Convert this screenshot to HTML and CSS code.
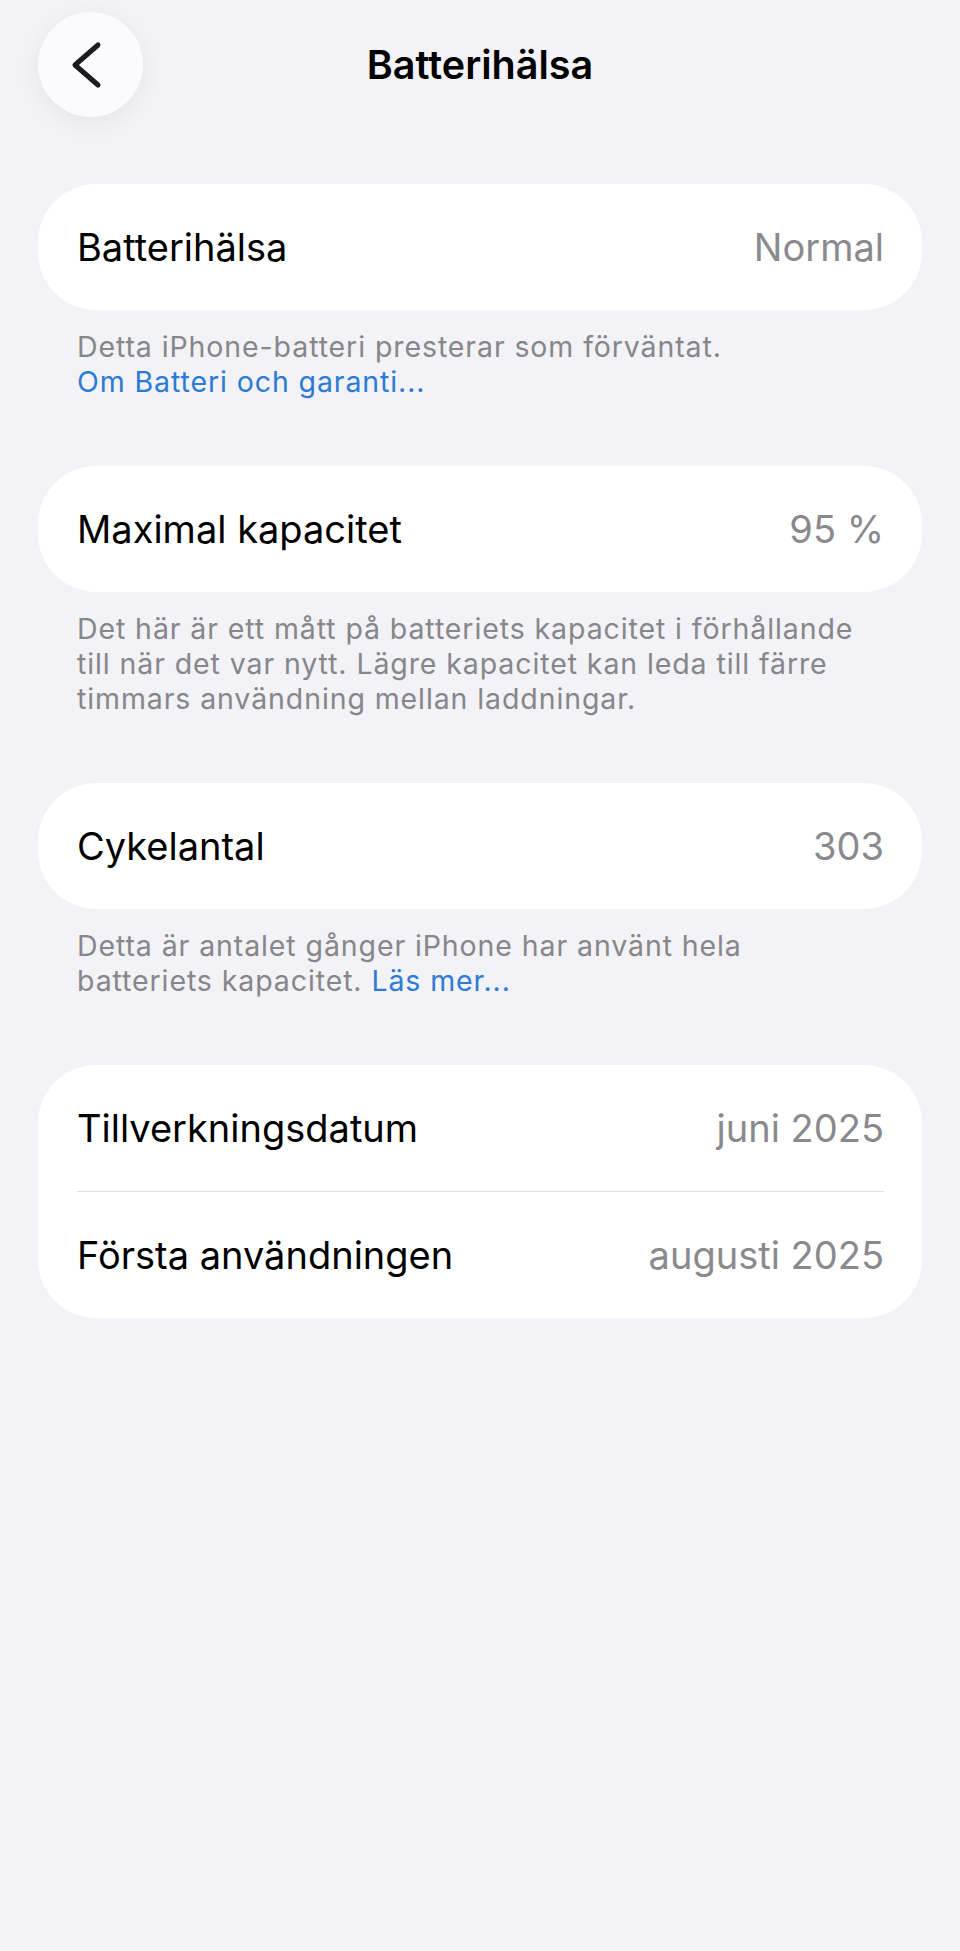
FILE: index.html
```html
<!DOCTYPE html>
<html lang="sv">
  <head>
    <meta charset="UTF-8" />
    <title>Batterihälsa</title>
    <meta name="viewport" content="width=device-width, initial-scale=1.0" />
    <link rel="stylesheet" href="styles.css">
  </head>
  <body>
    <header class="nav-bar">
      <button class="back-btn" type="button" aria-label="Tillbaka">
        <svg width="105" height="105" viewBox="0 0 105 105">
          <polyline points="60,33 37,53 60,73" fill="none" stroke="#1c1c1e" stroke-width="5" stroke-linecap="round" stroke-linejoin="round" />
        </svg>
      </button>
      <h1>Batterihälsa</h1>
    </header>

    <main class="settings">
      <section class="group">
        <div class="card">
          <div class="row">
            <span class="label">Batterihälsa</span>
            <span class="value">Normal</span>
          </div>
        </div>
        <p class="footer">
          Detta iPhone-batteri presterar som förväntat.<br />
          <a href="#">Om Batteri och garanti...</a>
        </p>
      </section>

      <section class="group">
        <div class="card">
          <div class="row">
            <span class="label">Maximal kapacitet</span>
            <span class="value">95 %</span>
          </div>
        </div>
        <p class="footer">
          Det här är ett mått på batteriets kapacitet i förhållande till när det var nytt. Lägre kapacitet kan leda till färre timmars användning mellan laddningar.
        </p>
      </section>

      <section class="group">
        <div class="card">
          <div class="row">
            <span class="label">Cykelantal</span>
            <span class="value">303</span>
          </div>
        </div>
        <p class="footer">
          Detta är antalet gånger iPhone har använt hela batteriets kapacitet. <a href="#">Läs mer...</a>
        </p>
      </section>

      <section class="group">
        <div class="card">
          <div class="row">
            <span class="label">Tillverkningsdatum</span>
            <span class="value">juni 2025</span>
          </div>
          <div class="row">
            <span class="label">Första användningen</span>
            <span class="value">augusti 2025</span>
          </div>
        </div>
      </section>
    </main>
  </body>
</html>
```

FILE: styles.css
```css
html {
  height: 100%;
}

body {
  margin: 0;
  min-height: 100%;
  padding: 12px 38px 0;
  box-sizing: border-box;
  background: #f2f2f7;
  font-family: Inter, "Noto Sans", sans-serif;
  color: #000;
}

.nav-bar {
  display: grid;
  grid-template-columns: 105px 1fr 105px;
  align-items: center;
}

.nav-bar h1 {
  grid-column: 2;
  margin: 0;
  font-size: 39.5px;
  font-weight: 600;
  text-align: center;
}

.back-btn {
  width: 105px;
  height: 105px;
  padding: 0;
  border: none;
  border-radius: 50%;
  background: #fbfbfd;
  box-shadow: 0 6px 24px rgba(0, 0, 0, 0.06);
}

.back-btn svg {
  display: block;
}

.settings {
  margin-top: 67px;
}

.group {
  margin-bottom: 67px;
}

.card {
  background: #fff;
  border-radius: 58px;
}

.row {
  display: flex;
  justify-content: space-between;
  align-items: center;
  height: 126px;
  margin: 0 38px 0 39px;
  font-size: 38px;
}

.row + .row {
  border-top: 1px solid #dedee3;
}

.value {
  color: #8a8a8e;
}

.footer {
  margin: 19px 49px 0 39px;
  font-size: 28.5px;
  letter-spacing: 0.9px;
  line-height: 35px;
  color: #86868b;
}

.footer a {
  color: #2b7bd6;
  text-decoration: none;
}
```
